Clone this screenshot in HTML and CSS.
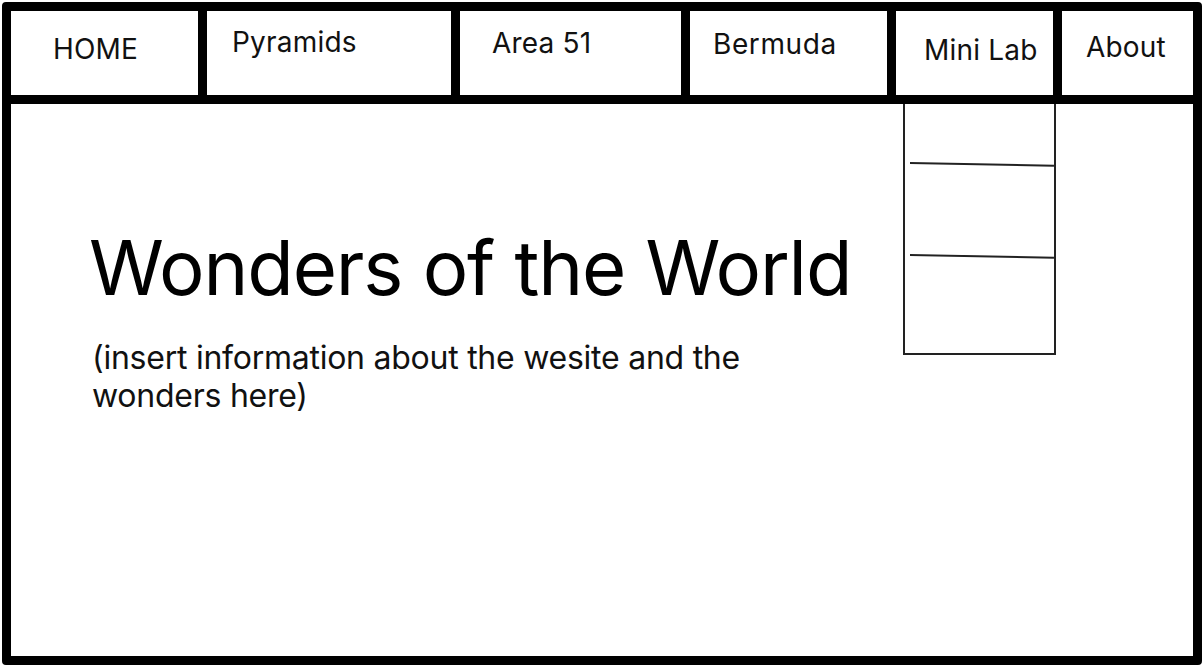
FILE: index.html
```html
<!DOCTYPE html>
<html lang="en">
<head>
<meta charset="utf-8">
<title>Wonders of the World</title>
<link rel="stylesheet" href="styles.css">
</head>
<body>
<div class="frame">
  <nav class="nav">
    <div class="cell cell-home"><span>HOME</span></div>
    <div class="cell cell-pyramids"><span>Pyramids</span></div>
    <div class="cell cell-area"><span>Area 51</span></div>
    <div class="cell cell-bermuda"><span>Bermuda</span></div>
    <div class="cell cell-lab"><span>Mini Lab</span>
      <div class="dropdown">
        <div class="drop-item"><div class="sep"></div></div>
        <div class="drop-item"><div class="sep"></div></div>
        <div class="drop-item"></div>
      </div>
    </div>
    <div class="cell cell-about"><span>About</span></div>
  </nav>
  <main class="main">
    <h1 class="title">Wonders of the World</h1>
    <p class="intro">(insert information about the wesite and the wonders here)</p>
  </main>
</div>
</body>
</html>
```
FILE: styles.css
```css
html, body {
  margin: 0;
  padding: 0;
  background: #fff;
}
body {
  font-family: Inter, "Liberation Sans", Arial, sans-serif;
  color: #111;
}
.frame {
  box-sizing: border-box;
  margin: 2px 2px 0 2px;
  width: 1200px;
  height: 663px;
  border: 9px solid #000;
  border-radius: 4px;
  display: flex;
  flex-direction: column;
}
.nav {
  display: grid;
  grid-template-columns: 187px 253px 230px 206px 166px 140px;
  height: 93px;
  box-sizing: border-box;
  border-bottom: 9px solid #000;
}
.cell {
  box-sizing: border-box;
  position: relative;
  font-size: 28px;
  line-height: 32px;
  letter-spacing: 0.2px;
}
.cell + .cell {
  border-left: 9px solid #000;
}
.cell-home { padding: 22px 0 0 42px; }
.cell-pyramids { padding: 15px 0 0 25px; }
.cell-area { padding: 16px 0 0 32px; }
.cell-bermuda { padding: 17px 0 0 23px; letter-spacing: 0.6px; }
.cell-lab { padding: 23px 0 0 28px; }
.cell-about { padding: 20px 0 0 24px; }
.dropdown {
  position: absolute;
  left: 7px;
  top: calc(100% + 9px);
  width: 153px;
  height: 251px;
  box-sizing: border-box;
  border: 2px solid #222;
  border-top: none;
  display: flex;
  flex-direction: column;
}
.drop-item {
  position: relative;
  height: 92px;
}
.drop-item:first-child { height: 60px; }
.sep {
  position: absolute;
  left: 5px;
  right: 0;
  bottom: 0;
  height: 2px;
  background: #222;
  transform: rotate(1.1deg);
  transform-origin: left center;
}
.main {
  flex: 1;
  padding: 125px 0 0 78px;
}
.title {
  margin: 0;
  font-size: 76px;
  line-height: 76px;
  font-weight: 400;
  color: #000;
  letter-spacing: -1.1px;
}
.intro {
  margin: 34px 0 0 3px;
  width: 690px;
  font-size: 32px;
  line-height: 38px;
  letter-spacing: -0.25px;
  color: #111;
}
```
